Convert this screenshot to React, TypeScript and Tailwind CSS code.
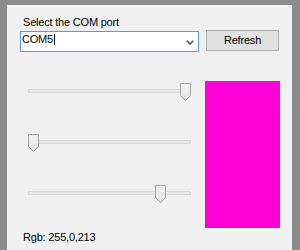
import React from 'react';

const Thumb: React.FC = () => (
  <svg width="11" height="19" viewBox="0 0 11 19" className="block">
    <defs>
      <linearGradient id="thumbFill" x1="0" y1="0" x2="0" y2="1">
        <stop offset="0" stopColor="#f2f2f2" />
        <stop offset="1" stopColor="#e3e3e3" />
      </linearGradient>
    </defs>
    <path d="M0.5 0.5 H10.5 V12.5 L5.5 17.5 L0.5 12.5 Z" fill="url(#thumbFill)" stroke="#a3a3a3" />
  </svg>
);

const Slider: React.FC<{ value: number }> = ({ value }) => {
  const left = Math.round((value / 255) * 152);
  return (
    <div className="relative w-[163px] h-[19px]">
      <div className="absolute left-0 right-0 top-[6px] h-[4px] border border-[#d6d6d6] bg-[#e7eaea]" />
      <div className="absolute top-0" style={{ left }}>
        <Thumb />
      </div>
    </div>
  );
};

const App: React.FC = () => {
  const rgb = { r: 255, g: 0, b: 213 };

  return (
    <div className="w-[300px] h-[250px] bg-[#8c8c8c] pl-[7px] pt-[5px] pr-[8px] font-['Liberation_Sans',Arial,sans-serif] text-[11px] leading-[13px] tracking-[-0.2px] text-black">
      <div className="h-full bg-[#f0f0f0] flex flex-col">
        <div className="pt-[11px] pl-[16px]">Select the COM port</div>

        <div className="flex items-start mt-[1px]">
          <div className="mt-px ml-[13px] w-[179px] h-[21px] border border-[#569de5] bg-white flex items-start pl-[1px] pt-[1px]">
            <span>COM5</span>
            <span className="inline-block w-px h-[11px] bg-black mt-[1px] ml-px" />
            <svg width="8" height="5" viewBox="0 0 8 5" className="ml-auto mr-[4px] mt-[7px]">
              <polyline points="0.7,0.7 4,4 7.3,0.7" fill="none" stroke="#555" strokeWidth="1.6" />
            </svg>
          </div>
          <button className="ml-[7px] w-[73px] h-[21px] border border-[#adadad] bg-[#e1e1e1] flex items-center justify-center">
            Refresh
          </button>
        </div>

        <div className="flex items-start">
          <div className="ml-[21px] mt-[31px] flex flex-col gap-[32px]">
            <Slider value={rgb.r} />
            <Slider value={rgb.g} />
            <Slider value={rgb.b} />
          </div>
          <div
            className="ml-[14px] mt-[29px] w-[75px] h-[147px]"
            style={{ backgroundColor: `rgb(${rgb.r},${rgb.g},${rgb.b})` }}
          />
        </div>

        <div className="mt-[3px] pl-[16px]">
          Rgb: {rgb.r},{rgb.g},{rgb.b}
        </div>
      </div>
    </div>
  );
};

export default App;
